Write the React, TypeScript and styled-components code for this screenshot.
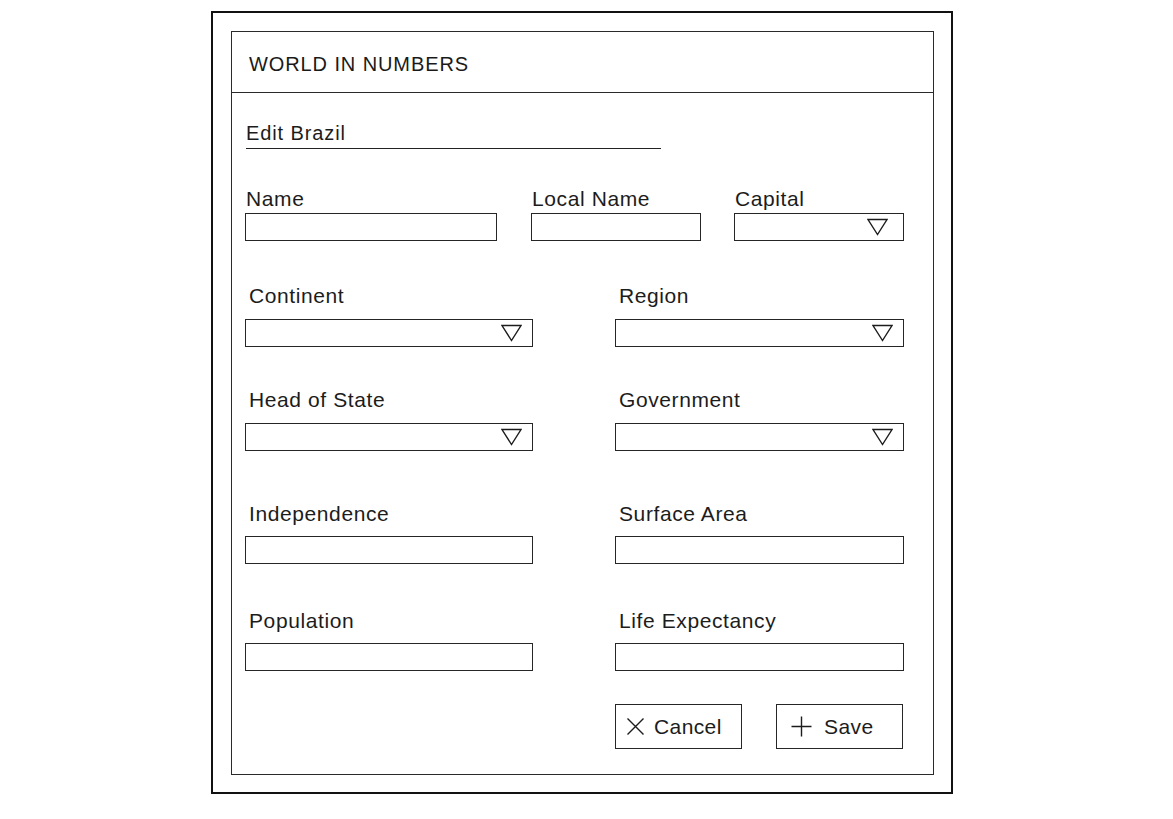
import React from "react";
import styled, { createGlobalStyle } from "styled-components";

const GlobalStyle = createGlobalStyle`
  html, body {
    margin: 0;
    padding: 0;
    background: #ffffff;
  }
  body {
    font-family: "Liberation Sans", Arial, sans-serif;
    color: #1c1c1c;
  }
  * { box-sizing: border-box; }
`;

const Page = styled.div`
  width: 1173px;
  height: 819px;
  padding: 11px 0 0 211px;
`;

const Frame = styled.div`
  width: 742px;
  height: 783px;
  border: 2px solid #111;
  padding: 18px 17px 17px 18px;
`;

const Panel = styled.div`
  height: 100%;
  border: 1px solid #2a2a2a;
  display: flex;
  flex-direction: column;
`;

const Header = styled.header`
  height: 61px;
  border-bottom: 1px solid #2a2a2a;
  padding: 20px 17px 0;
  font-size: 20px;
  line-height: 24px;
  letter-spacing: 0.9px;
  color: #1a1a1a;
`;

const Body = styled.div`
  padding: 0 0 0 13px;
  display: flex;
  flex-direction: column;
`;

const Title = styled.h1`
  margin: 28px 0 0 1px;
  width: 415px;
  padding-bottom: 3px;
  border-bottom: 1px solid #222;
  font-size: 20px;
  line-height: 24px;
  font-weight: normal;
  letter-spacing: 0.9px;
  color: #1c1c1c;
`;

const Row = styled.div<{ $mt: number; $cols: string; $gap: number }>`
  display: grid;
  grid-template-columns: ${(p) => p.$cols};
  column-gap: ${(p) => p.$gap}px;
  margin-top: ${(p) => p.$mt}px;
`;

const Field = styled.div<{ $shift: number }>`
  display: flex;
  flex-direction: column;
  margin-left: ${(p) => p.$shift}px;
`;

const Label = styled.label<{ $indent: number; $gap: number }>`
  font-size: 21px;
  line-height: 24px;
  letter-spacing: 0.6px;
  padding-left: ${(p) => p.$indent}px;
  margin-bottom: ${(p) => p.$gap}px;
  color: #1c1c1c;
`;

const TextInput = styled.input`
  height: 28px;
  width: 100%;
  border: 1px solid #262626;
  border-radius: 0;
  background: #fff;
  padding: 0 6px;
  outline: none;
  font: inherit;
`;

const SelectBox = styled.div<{ $arrowRight: number }>`
  height: 28px;
  width: 100%;
  border: 1px solid #262626;
  background: #fff;
  display: flex;
  align-items: center;
  justify-content: flex-end;
  padding-right: ${(p) => p.$arrowRight}px;
`;

const ButtonGroup = styled.div`
  grid-column: 2;
  display: flex;
  gap: 34px;
`;

const Button = styled.button<{ $pad: number; $gap: number }>`
  width: 127px;
  height: 45px;
  border: 1px solid #262626;
  background: #fff;
  border-radius: 0;
  display: flex;
  align-items: center;
  gap: ${(p) => p.$gap}px;
  padding: 0 0 0 ${(p) => p.$pad}px;
  font-family: "Liberation Sans", Arial, sans-serif;
  font-size: 21px;
  letter-spacing: 0.4px;
  color: #1c1c1c;
  cursor: pointer;
`;

const Arrow = () => (
  <svg width="21" height="18" viewBox="0 0 21 18">
    <polygon
      points="1,1.5 20,1.5 10.5,16.5"
      fill="none"
      stroke="#1c1c1c"
      strokeWidth="1.4"
      strokeLinejoin="miter"
    />
  </svg>
);

const CrossIcon = () => (
  <svg width="19" height="19" viewBox="0 0 19 19">
    <path d="M1.5 1.5 L17.5 17.5 M17.5 1.5 L1.5 17.5" stroke="#1c1c1c" strokeWidth="1.4" fill="none" />
  </svg>
);

const PlusIcon = () => (
  <svg width="21" height="21" viewBox="0 0 21 21">
    <path d="M10.5 0.5 L10.5 20.5 M0.5 10.5 L20.5 10.5" stroke="#1c1c1c" strokeWidth="1.4" fill="none" />
  </svg>
);

type FieldDef = { label: string; select?: boolean };

const FieldItem = ({
  f,
  indent,
  gap,
  arrowRight,
  shift = 0,
}: {
  f: FieldDef;
  indent: number;
  gap: number;
  arrowRight: number;
  shift?: number;
}) => (
  <Field $shift={shift}>
    <Label $indent={indent} $gap={gap}>
      {f.label}
    </Label>
    {f.select ? (
      <SelectBox $arrowRight={arrowRight}>
        <Arrow />
      </SelectBox>
    ) : (
      <TextInput readOnly />
    )}
  </Field>
);

const pairRows: { mt: number; gap: number; fields: FieldDef[] }[] = [
  { mt: 43, gap: 11, fields: [{ label: "Continent", select: true }, { label: "Region", select: true }] },
  { mt: 41, gap: 11, fields: [{ label: "Head of State", select: true }, { label: "Government", select: true }] },
  { mt: 51, gap: 10, fields: [{ label: "Independence" }, { label: "Surface Area" }] },
  { mt: 45, gap: 10, fields: [{ label: "Population" }, { label: "Life Expectancy" }] },
];

export default function App() {
  return (
    <>
      <GlobalStyle />
      <Page>
        <Frame>
          <Panel>
            <Header>WORLD IN NUMBERS</Header>
            <Body>
              <Title>Edit Brazil</Title>
              <Row $mt={38} $cols="252px 170px 169px" $gap={34}>
                <FieldItem f={{ label: "Name" }} indent={1} gap={2} arrowRight={15} />
                <FieldItem f={{ label: "Local Name" }} indent={1} gap={2} arrowRight={15} />
                <FieldItem f={{ label: "Capital", select: true }} indent={1} gap={2} arrowRight={15} shift={-1} />
              </Row>
              {pairRows.map((r) => (
                <Row key={r.fields[0].label} $mt={r.mt} $cols="288px 289px" $gap={82}>
                  {r.fields.map((f) => (
                    <FieldItem key={f.label} f={f} indent={4} gap={r.gap} arrowRight={10} />
                  ))}
                </Row>
              ))}
              <Row $mt={33} $cols="288px 289px" $gap={82}>
                <ButtonGroup>
                  <Button $pad={10} $gap={9}>
                    <CrossIcon />
                    Cancel
                  </Button>
                  <Button $pad={14} $gap={12}>
                    <PlusIcon />
                    Save
                  </Button>
                </ButtonGroup>
              </Row>
            </Body>
          </Panel>
        </Frame>
      </Page>
    </>
  );
}
